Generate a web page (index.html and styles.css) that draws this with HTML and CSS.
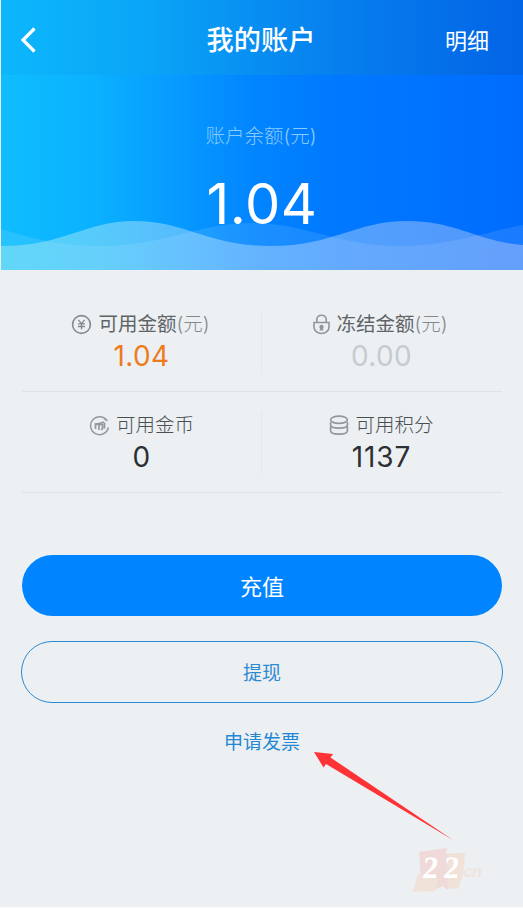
FILE: index.html
```html
<!DOCTYPE html>
<html lang="zh-CN">
<head>
<meta charset="utf-8">
<title>我的账户</title>
<link rel="stylesheet" href="styles.css">
</head>
<body>
<main class="screen">
  <header class="navbar">
    <svg class="back" width="18" height="26" viewBox="0 0 18 26"><path d="M14.500 1.500 3 13l11.500 11.500" fill="none" stroke="#fff" stroke-width="3.200"/></svg>
    <h1 class="title">我的账户</h1>
    <a class="detail">明细</a>
  </header>
  <section class="hero">
    <p class="hero-label">账户余额(元)</p>
    <p class="hero-value">1.04</p>
    <svg class="waves" width="522" height="50" viewBox="1 220 522 50">
      <defs>
        <linearGradient id="front" x1="0" x2="1" y1="0" y2="0">
          <stop offset="0" stop-color="#b4f2ee" stop-opacity=".42"/>
          <stop offset=".45" stop-color="#fff" stop-opacity=".32"/>
          <stop offset="1" stop-color="#f2e6f4" stop-opacity=".34"/>
        </linearGradient>
      </defs>
      <path fill="#fff" fill-opacity=".1" d="M1 229C30 237 55 246 100 246C164 246 199 223 251 223C306 223 338 246 399 246C448 246 482 233 523 225V270H1Z"/>
      <path fill="url(#front)" d="M1 246C65 246 84 221 135 221C185 221 208 246 271 246C334 246 355 221 407 221C457 221 479 242 523 245V270H1Z"/>
    </svg>
  </section>
  <section class="stats">
    <div class="cell">
      <div class="label">
        <svg class="icon yen" width="21" height="21" viewBox="0 0 21 21" fill="none" stroke="#85898c"><circle cx="10.500" cy="10.500" r="8.900" stroke-width="1.600"/><path d="M7.300 5.800 10.500 9.600l3.200-3.800M10.500 9.600v5.600M7 9.800h7M7 12.500h7" stroke-width="1.300"/></svg>
        <span>可用金额<small>(元)</small></span>
      </div>
      <div class="value orange">1.04</div>
    </div>
    <div class="cell">
      <div class="label">
        <svg class="icon lock" width="17" height="21" viewBox="0 0 17 21" fill="none" stroke="#929699" stroke-width="1.600"><path d="M3.800 8.500V5.500a4.700 4.300 0 0 1 9.400 0v3M1 8.500h15v4.500a7.500 6.500 0 0 1-15 0Z"/><circle cx="8.500" cy="13" r="2.200" fill="#929699" stroke="none"/><path d="M6.300 16.500 8.500 13l2.200 3.500Z" fill="#929699" stroke="none"/></svg>
        <span>冻结金额<small>(元)</small></span>
      </div>
      <div class="value muted">0.00</div>
    </div>
    <div class="cell">
      <div class="label light">
        <svg class="icon coin" width="21" height="21" viewBox="0 0 21 21" fill="none" stroke="#95999c"><path d="M18.300 6A9 9 0 1 0 19.400 12.500M17 3.500 15.500 5" stroke-width="1.500"/><path d="M5.500 9c3 0 6-.5 9.500-2M6.500 14V9.500h7v4q0 1-1.500.8M10 8V15M15.500 7.500v6" stroke-width="1.700"/></svg>
        <span>可用金币</span>
      </div>
      <div class="value">0</div>
    </div>
    <div class="cell">
      <div class="label light">
        <svg class="icon stack" width="20" height="21" viewBox="0 0 20 21" fill="none" stroke="#94989b" stroke-width="1.700"><ellipse cx="10" cy="4.800" rx="8.400" ry="3.600"/><path d="M1.600 7v2.800c0 4.500 16.800 4.500 16.800 0V7M1.600 11.500v4.300c0 4.500 16.800 4.500 16.800 0v-4.300"/></svg>
        <span>可用积分</span>
      </div>
      <div class="value points">1137</div>
    </div>
  </section>
  <section class="actions">
    <button class="btn primary">充值</button>
    <button class="btn outline">提现</button>
    <a class="invoice">申请发票</a>
  </section>
  <svg class="arrow" width="142" height="92" viewBox="0 0 142 92"><path fill="#ff3335" d="M0 0 19 2 16.500 5.500 139 88 12 12 9.500 15.500Z"/></svg>
  <svg class="watermark" width="72" height="48" viewBox="0 0 72 48">
    <path fill="#f0dad9" d="M6 4 34 0 33 6 52 5 49 17 50 27 44 41 38 37 34 42 30 38 22 42 25 31 12 38 8 34Z"/>
    <path fill="#f0e2d8" d="M34 7 52 5 50 28 45 40 35 41ZM5 26 25 31 22 43 0 44Z"/>
    <g transform="skewX(-6)">
      <text class="mark-num" x="12" y="30">2</text>
      <text class="mark-num" x="33" y="30">2</text>
    </g>
    <text class="mark-cn" x="46" y="29">.cn</text>
  </svg>
</main>
</body>
</html>
```

FILE: styles.css
```css
* { box-sizing: border-box; }
body { margin: 0; background: #ecf0f3; }
h1, p { margin: 0; font-weight: 400; }

.screen {
  position: relative;
  width: 523px;
  height: 908px;
  padding-left: 1px;
  overflow: hidden;
  background: #ecf0f3;
  border-bottom: 1px solid #fafcfd;
  font-family: Inter, "Noto Sans CJK SC", sans-serif;
  font-weight: 400;
}

.navbar {
  display: grid;
  grid-template-columns: 120px 1fr 120px;
  align-items: center;
  height: 75px;
  padding: 5px 34px 0 19px;
  background: linear-gradient(90deg, #0cb7fc 0%, #0ba5f7 28%, #078bf1 52%, #0679ec 72%, #0264e6 100%);
  color: #fff;
}
.back { display: block; }
.title {
  padding: 2px 0 0 13px;
  font-size: 27.200px;
  font-weight: 500;
  line-height: 40px;
  text-align: center;
}
.detail { padding-top: 2px; font-size: 22px; line-height: 32px; text-align: right; }

.hero {
  position: relative;
  height: 195px;
  padding-top: 46px;
  background: linear-gradient(90deg, #0fbdff 0%, #0bb1ff 18%, #079bff 33%, #0284ff 49%, #0079ff 64%, #006cff 100%);
  color: #fff;
  text-align: center;
}
.hero-label { margin-left: -2px; font-size: 19.500px; font-weight: 300; line-height: 30px; color: #8acbff; }
.hero-value {
  position: relative;
  z-index: 1;
  margin-top: 17px;
  font-size: 56px;
  letter-spacing: 0.500px;
  line-height: 72px;
}
.waves { position: absolute; left: 0; bottom: 0; display: block; }

.stats {
  display: grid;
  grid-template-columns: 240px 240px;
  grid-template-rows: 101px 101px;
  margin: 21px 0 0 21px;
}
.cell {
  position: relative;
  padding-top: 18px;
  border-bottom: 1px solid #dfe3e6;
  text-align: center;
}
.cell:nth-child(odd)::after {
  content: "";
  position: absolute;
  top: 20px;
  right: 0;
  width: 1px;
  height: 62px;
  background: #e4e8eb;
}
.label {
  display: flex;
  align-items: center;
  justify-content: center;
  gap: 6px;
  height: 30px;
  margin-left: -3px;
  font-size: 19.500px;
  line-height: 30px;
  color: #5f6467;
}
.light { margin-left: -1px; font-weight: 300; color: #4a4f52; }
.label small { font-size: 19.500px; font-weight: 300; color: #85898c; }
.value { margin-left: -1px; font-size: 28px; line-height: 35px; letter-spacing: 0.400px; color: #2c3033; }
.orange { color: #ee7b1e; }
.muted { color: #c7cbce; }
.points { letter-spacing: 0.900px; }

.actions {
  display: flex;
  flex-direction: column;
  align-items: center;
  padding: 62px 20px 0;
}
.btn {
  width: 480px;
  height: 61px;
  padding: 0 0 2px;
  border: 0;
  border-radius: 31px;
  font-family: inherit;
  font-weight: inherit;
}
.primary { background: #0084ff; color: #fff; font-size: 22px; }
.outline {
  width: 482px;
  height: 62px;
  margin-top: 25px;
  border: 1.500px solid #2c8bd0;
  border-radius: 32px;
  background: transparent;
  color: #2c8ad2;
  font-size: 19px;
}
.invoice { margin-top: 25px; color: #2487d3; font-size: 19px; line-height: 30px; }

.arrow { position: absolute; left: 314px; top: 752px; }
.watermark { position: absolute; left: 413px; top: 848px; overflow: visible; }
.mark-num {
  fill: #fff;
  font: 700 31px "Liberation Serif", serif;
}
.mark-cn {
  fill: #f0e4dc;
  font: italic 700 16px "Liberation Sans", sans-serif;
}
```
